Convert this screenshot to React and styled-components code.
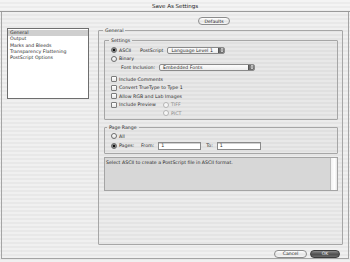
import styled, { createGlobalStyle } from 'styled-components';

const GlobalStyle = createGlobalStyle`
  html, body {
    margin: 0;
    padding: 0;
    background: #ececec;
  }
  body {
    font-family: "DejaVu Sans", "Liberation Sans", sans-serif;
  }
  * {
    box-sizing: border-box;
  }
`

const pages = ['General', 'Output', 'Marks and Bleeds', 'Transparency Flattening', 'PostScript Options'];

function Radio({ checked, disabled, children }) {
  return (
    <Option $disabled={disabled}>
      <RadioDot $checked={checked} $disabled={disabled} />
      {children}
    </Option>
  )
}

function Check({ children }) {
  return (
    <Option>
      <CheckBox />
      {children}
    </Option>
  )
}

function Popup({ width, children }) {
  return (
    <Select style={{ width }}>
      <span>{children}</span>
      <Stepper>
        <svg width="4" height="6" viewBox="0 0 4 6">
          <path d="M0.5 2.5 L2 0.8 L3.5 2.5 Z M0.5 3.5 L2 5.2 L3.5 3.5 Z" fill="#f4f4f4" />
        </svg>
      </Stepper>
    </Select>
  )
}

function App() {
  return (
    <>
      <GlobalStyle />
      <Window>
        <TitleBar>Save As Settings</TitleBar>
        <Frame>
          <TopRow>
            <PillButton>Defaults</PillButton>
          </TopRow>
          <Main>
            <List>
              {pages.map((p, i) => (
                <ListItem key={p} $selected={i === 0}>{p}</ListItem>
              ))}
            </List>
            <Group $height="218px" $pad="3px 4px 0 5px" $top="-1.5px">
              <Legend $shift="-1px">General</Legend>
              <Group $pad="0 3px 1px 6px">
                <Legend $shift="-2px">Settings</Legend>
                <Rows>
                  <Row $top="2.5px">
                    <Cell $w="29px"><Radio checked>ASCII</Radio></Cell>
                    <FieldLabel>PostScript</FieldLabel>
                    <Popup width="58px">Language Level 1</Popup>
                  </Row>
                  <Row>
                    <Radio>Binary</Radio>
                  </Row>
                  <Row $indent="10px">
                    <FieldLabel>Font Inclusion:</FieldLabel>
                    <Popup width="96px">Embedded Fonts</Popup>
                  </Row>
                  <Row $top="3.5px"><Check>Include Comments</Check></Row>
                  <Row><Check>Convert TrueType to Type 1</Check></Row>
                  <Row><Check>Allow RGB and Lab Images</Check></Row>
                  <Row>
                    <Cell $w="52px"><Check>Include Preview</Check></Cell>
                    <Radio disabled>TIFF</Radio>
                  </Row>
                  <Row $indent="52px">
                    <Radio disabled>PICT</Radio>
                  </Row>
                </Rows>
              </Group>
              <Group $pad="0 3px 2px 6px" $top="4px">
                <Legend $shift="-4px">Page Range</Legend>
                <Rows>
                  <Row $top="1.5px"><Radio>All</Radio></Row>
                  <Row $h="10px">
                    <Cell $w="30px"><Radio checked>Pages:</Radio></Cell>
                    <FieldLabel>From:</FieldLabel>
                    <TextInput $w="43px">1</TextInput>
                    <FieldLabel $left="5px">To:</FieldLabel>
                    <TextInput $w="44px">1</TextInput>
                  </Row>
                </Rows>
              </Group>
              <Description>
                <DescText>Select ASCII to create a PostScript file in ASCII format.</DescText>
                <ScrollTrack />
              </Description>
            </Group>
          </Main>
          <ButtonRow>
            <PillButton $w="33px">Cancel</PillButton>
            <PillButton $w="30px" $default>OK</PillButton>
          </ButtonRow>
        </Frame>
      </Window>
    </>
  );
}

const Window = styled.div`
  width: 350px;
  height: 262px;
  overflow: hidden;
  display: flex;
  flex-direction: column;
  color: #2a2a2a;
  font-size: 4.7px;
  background: repeating-linear-gradient(to bottom, #f0f0f0 0 2px, #e8e8e8 2px 4px);
`
const TitleBar = styled.div`
  height: 12px;
  flex: none;
  display: flex;
  align-items: center;
  justify-content: center;
  font-size: 5.5px;
  color: #222;
  border-bottom: 1px solid #9a9a9a;
  background: repeating-linear-gradient(to bottom, #f4f4f4 0 2px, #ececec 2px 4px);
`
const Frame = styled.div`
  height: 247px;
  flex: none;
  margin: 0 1px;
  border: 1px solid #a4a4a4;
  border-top: none;
  display: flex;
  flex-direction: column;
  padding: 5px 5px 0 5px;
`
const TopRow = styled.div`
  display: flex;
  justify-content: center;
  padding-left: 78px;
`
const PillButton = styled.div`
  width: ${p => p.$w || '32px'};
  height: 8px;
  display: flex;
  align-items: center;
  justify-content: center;
  border-radius: 4px;
  border: 1px solid ${p => p.$default ? '#3c3c3c' : '#8c8c8c'};
  background: ${p => p.$default
    ? 'linear-gradient(#8a8a8a, #4e4e4e 55%, #6a6a6a)'
    : 'linear-gradient(#ffffff, #e6e6e6 55%, #f6f6f6)'};
  color: ${p => p.$default ? '#f2f2f2' : '#222'};
  font-size: 4.6px;
`
const Main = styled.div`
  display: grid;
  grid-template-columns: 82px 245px;
  column-gap: 9px;
  align-items: start;
  margin-top: 3px;
`
const List = styled.div`
  height: 71px;
  background: #fff;
  border: 1px solid #6e6e6e;
  padding: 1px 0;
`
const ListItem = styled.div`
  height: 6.3px;
  line-height: 6.3px;
  padding-left: 2px;
  white-space: nowrap;
  background: ${p => p.$selected ? '#cfcfcf' : 'transparent'};
`
const Group = styled.fieldset`
  margin: ${p => p.$top || '0'} 0 0 0;
  padding: ${p => p.$pad};
  height: ${p => p.$height || 'auto'};
  min-width: 0;
  border: 1px solid #a6a6a6;
  border-radius: 1px;
  background: rgba(0, 0, 0, 0.015);
  display: flex;
  flex-direction: column;
`
const Legend = styled.legend`
  padding: 0 2px;
  margin-left: ${p => p.$shift || '0'};
  height: 7px;
  line-height: 7px;
  font-size: 4.7px;
`
const Rows = styled.div`
  display: flex;
  flex-direction: column;
`
const Row = styled.div`
  height: ${p => p.$h || '8.5px'};
  margin-top: ${p => p.$top || '0'};
  padding-left: ${p => p.$indent || '0'};
  display: flex;
  align-items: center;
  white-space: nowrap;
`
const Cell = styled.div`
  width: ${p => p.$w};
  flex: none;
`
const Option = styled.div`
  display: flex;
  align-items: center;
  gap: 2px;
  color: ${p => p.$disabled ? '#8a8a8a' : 'inherit'};
`
const RadioDot = styled.span`
  width: 6px;
  height: 6px;
  flex: none;
  border-radius: 50%;
  border: 1px solid ${p => p.$disabled ? '#b4b4b4' : '#6c6c6c'};
  background: ${p => p.$checked
    ? 'radial-gradient(circle, #111 0 1.2px, #8c8c8c 1.6px)'
    : p.$disabled ? '#f6f6f6' : 'linear-gradient(#fff, #e4e4e4)'};
`
const CheckBox = styled.span`
  width: 6px;
  height: 6px;
  flex: none;
  border: 1px solid #7c7c7c;
  border-radius: 1px;
  background: linear-gradient(#fff, #e6e6e6);
`
const FieldLabel = styled.span`
  margin-left: ${p => p.$left || '0'};
  margin-right: 4px;
`
const Select = styled.div`
  height: 7px;
  display: flex;
  align-items: center;
  justify-content: space-between;
  border: 1px solid #8a8a8a;
  border-radius: 2px;
  background: linear-gradient(#fdfdfd, #ececec);
  padding-left: 3px;
  overflow: hidden;
`
const Stepper = styled.span`
  width: 6px;
  height: 100%;
  display: flex;
  align-items: center;
  justify-content: center;
  background: #6e6e6e;
  border-left: 1px solid #555;
`
const TextInput = styled.div`
  width: ${p => p.$w};
  height: 8px;
  display: flex;
  align-items: center;
  padding-left: 2px;
  background: #fff;
  border: 1px solid #8a8a8a;
  box-shadow: inset 0 1px 0 #cfcfcf;
`
const Description = styled.div`
  margin-top: 3px;
  height: 34px;
  display: flex;
  border: 1px solid #a4a4a4;
  background: #d7d7d7;
`
const DescText = styled.div`
  flex: 1;
  padding: 2px 0 0 1px;
`
const ScrollTrack = styled.div`
  width: 7px;
  background: linear-gradient(to right, #f2f2f2, #ffffff 60%, #e8e8e8);
  border-left: 1px solid #bdbdbd;
`
const ButtonRow = styled.div`
  display: flex;
  justify-content: flex-end;
  gap: 3px;
  margin-top: 5px;
  padding-right: 3px;
`

export default App;
